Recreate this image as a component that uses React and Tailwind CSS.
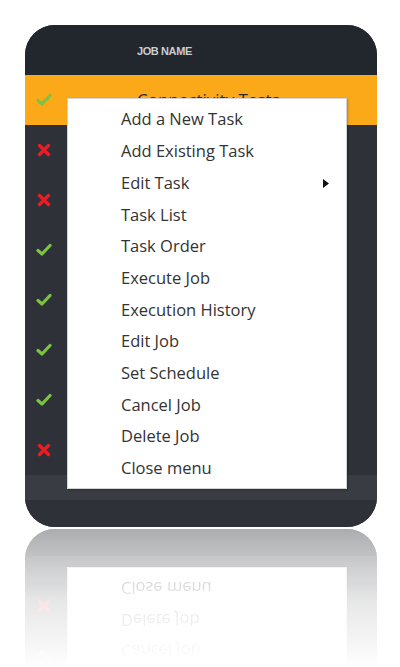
const menuItems = [
  'Add a New Task',
  'Add Existing Task',
  'Edit Task',
  'Task List',
  'Task Order',
  'Execute Job',
  'Execution History',
  'Edit Job',
  'Set Schedule',
  'Cancel Job',
  'Delete Job',
  'Close menu',
];

const rows = ['ok', 'fail', 'fail', 'ok', 'ok', 'ok', 'ok', 'fail'];

const Check = () => (
  <svg width="16" height="14" viewBox="0 0 16 14">
    <path d="M2 7.5 L6 11 L14 2.5" fill="none" stroke="#7cc243" strokeWidth="3.2" strokeLinecap="round" strokeLinejoin="round" />
  </svg>
);

const Cross = () => (
  <svg width="14" height="14" viewBox="0 0 14 14">
    <path d="M2.5 2.5 L11.5 11.5 M11.5 2.5 L2.5 11.5" fill="none" stroke="#ec1c24" strokeWidth="3.4" strokeLinecap="round" />
  </svg>
);

const Card = () => {
  return (
    <div className="relative h-[502px] w-[352px] overflow-hidden rounded-[30px] bg-[#2f3139]">
      {/* Header */}
      <div className="flex h-[50px] items-center bg-[#22262d] pl-[112px] pt-[2px]">
        <span className="text-[11px] font-bold tracking-[-0.4px] text-[#c9ced4]" style={{ fontFamily: '"Liberation Sans", Arial, sans-serif' }}>
          JOB NAME
        </span>
      </div>

      {/* Rows */}
      {rows.map((status, i) => (
        <div
          key={i}
          className={`flex h-[50px] items-center pl-[11px] ${i === 0 ? 'bg-[#fba919]' : 'bg-[#2f3139]'}`}
        >
          <div className="flex w-[16px] justify-center">{status === 'ok' ? <Check /> : <Cross />}</div>
          {i === 0 && (
            <span className="ml-[85px] text-[17px] text-[#2a2a2a]" style={{ fontFamily: '"Open Sans", sans-serif' }}>
              Connectivity Tests
            </span>
          )}
        </div>
      ))}

      {/* Footer band */}
      <div className="h-[25px] bg-[#3a3c44]" />
      <div className="h-[27px] bg-[#2f3139]" />

      {/* Context menu */}
      <div
        className="absolute left-[42px] top-[73px] w-[280px] border border-[#d4d4d4] bg-white pb-[4px] pt-[5px] shadow-[1px_1px_2px_rgba(0,0,0,0.25)]"
        style={{ fontFamily: '"Open Sans", sans-serif' }}
      >
        {menuItems.map((item) => (
          <div key={item} className="flex h-[31.7px] items-center justify-between pl-[53px] pr-[17px] text-[16.5px] text-[#333]">
            <span>{item}</span>
            {item === 'Edit Task' && (
              <svg width="6" height="9" viewBox="0 0 6 9">
                <path d="M0 0 L6 4.5 L0 9 Z" fill="#111" />
              </svg>
            )}
          </div>
        ))}
      </div>
    </div>
  );
};

export default function App() {
  return (
    <div className="h-[667px] w-[400px] overflow-hidden bg-white pl-[25px] pt-[25px]">
      <Card />
      {/* Reflection */}
      <div className="relative mt-[2px] h-[140px] w-[352px] overflow-hidden">
        <div className="-scale-y-100 blur-[0.6px]">
          <Card />
        </div>
        <div className="absolute inset-0 bg-gradient-to-b from-white/60 via-white/88 to-white" />
      </div>
    </div>
  );
}
